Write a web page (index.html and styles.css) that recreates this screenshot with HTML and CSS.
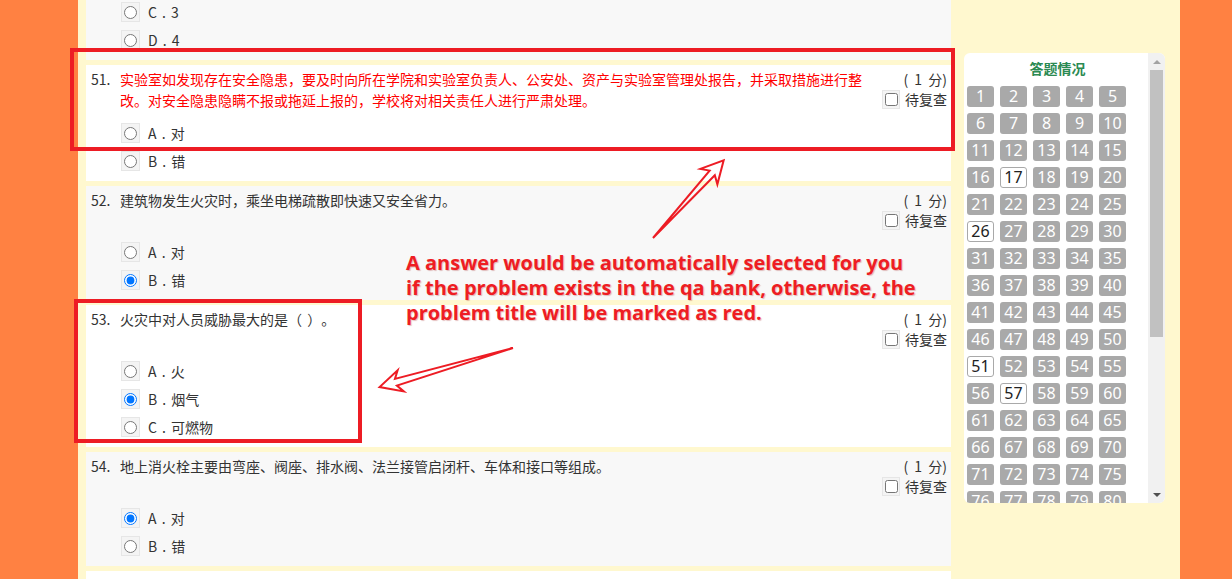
FILE: index.html
```html
<!DOCTYPE html>
<html lang="zh">
<head>
<meta charset="utf-8">
<title>答题</title>
<link rel="stylesheet" href="styles.css">
</head>
<body>
<div class="main">
  <div class="list">
    <div class="card alt partial">
      <div class="options">
        <label class="opt"><span class="radio-box"><input type="radio" name="q50"></span><span>C . 3</span></label>
        <label class="opt"><span class="radio-box"><input type="radio" name="q50"></span><span>D . 4</span></label>
      </div>
    </div>

    <div class="card">
      <div class="q-head tall">
        <div class="q-num">51.</div>
        <div class="q-title red">实验室如发现存在安全隐患，要及时向所在学院和实验室负责人、公安处、资产与实验室管理处报告，并采取措施进行整改。对安全隐患隐瞒不报或拖延上报的，学校将对相关责任人进行严肃处理。</div>
        <div class="q-side">
          <div class="score">( 1 分)</div>
          <label class="review"><span class="check-box"><input type="checkbox"></span><span>待复查</span></label>
        </div>
      </div>
      <div class="options">
        <label class="opt"><span class="radio-box"><input type="radio" name="q51"></span><span>A . 对</span></label>
        <label class="opt"><span class="radio-box"><input type="radio" name="q51"></span><span>B . 错</span></label>
      </div>
    </div>

    <div class="card alt">
      <div class="q-head">
        <div class="q-num">52.</div>
        <div class="q-title">建筑物发生火灾时，乘坐电梯疏散即快速又安全省力。</div>
        <div class="q-side">
          <div class="score">( 1 分)</div>
          <label class="review"><span class="check-box"><input type="checkbox"></span><span>待复查</span></label>
        </div>
      </div>
      <div class="options">
        <label class="opt"><span class="radio-box"><input type="radio" name="q52"></span><span>A . 对</span></label>
        <label class="opt"><span class="radio-box"><input type="radio" name="q52" checked></span><span>B . 错</span></label>
      </div>
    </div>

    <div class="card">
      <div class="q-head">
        <div class="q-num">53.</div>
        <div class="q-title">火灾中对人员威胁最大的是（ ）。</div>
        <div class="q-side">
          <div class="score">( 1 分)</div>
          <label class="review"><span class="check-box"><input type="checkbox"></span><span>待复查</span></label>
        </div>
      </div>
      <div class="options">
        <label class="opt"><span class="radio-box"><input type="radio" name="q53"></span><span>A . 火</span></label>
        <label class="opt"><span class="radio-box"><input type="radio" name="q53" checked></span><span>B . 烟气</span></label>
        <label class="opt"><span class="radio-box"><input type="radio" name="q53"></span><span>C . 可燃物</span></label>
      </div>
    </div>

    <div class="card alt">
      <div class="q-head">
        <div class="q-num">54.</div>
        <div class="q-title">地上消火栓主要由弯座、阀座、排水阀、法兰接管启闭杆、车体和接口等组成。</div>
        <div class="q-side">
          <div class="score">( 1 分)</div>
          <label class="review"><span class="check-box"><input type="checkbox"></span><span>待复查</span></label>
        </div>
      </div>
      <div class="options">
        <label class="opt"><span class="radio-box"><input type="radio" name="q54" checked></span><span>A . 对</span></label>
        <label class="opt"><span class="radio-box"><input type="radio" name="q54"></span><span>B . 错</span></label>
      </div>
    </div>

    <div class="card empty"></div>
  </div>

  <div class="side">
    <div class="side-body">
      <div class="side-title">答题情况</div>
      <div class="grid">
        <span class="n">1</span><span class="n">2</span><span class="n">3</span><span class="n">4</span><span class="n">5</span>
        <span class="n">6</span><span class="n">7</span><span class="n">8</span><span class="n">9</span><span class="n">10</span>
        <span class="n">11</span><span class="n">12</span><span class="n">13</span><span class="n">14</span><span class="n">15</span>
        <span class="n">16</span><span class="n on">17</span><span class="n">18</span><span class="n">19</span><span class="n">20</span>
        <span class="n">21</span><span class="n">22</span><span class="n">23</span><span class="n">24</span><span class="n">25</span>
        <span class="n on">26</span><span class="n">27</span><span class="n">28</span><span class="n">29</span><span class="n">30</span>
        <span class="n">31</span><span class="n">32</span><span class="n">33</span><span class="n">34</span><span class="n">35</span>
        <span class="n">36</span><span class="n">37</span><span class="n">38</span><span class="n">39</span><span class="n">40</span>
        <span class="n">41</span><span class="n">42</span><span class="n">43</span><span class="n">44</span><span class="n">45</span>
        <span class="n">46</span><span class="n">47</span><span class="n">48</span><span class="n">49</span><span class="n">50</span>
        <span class="n on">51</span><span class="n">52</span><span class="n">53</span><span class="n">54</span><span class="n">55</span>
        <span class="n">56</span><span class="n on">57</span><span class="n">58</span><span class="n">59</span><span class="n">60</span>
        <span class="n">61</span><span class="n">62</span><span class="n">63</span><span class="n">64</span><span class="n">65</span>
        <span class="n">66</span><span class="n">67</span><span class="n">68</span><span class="n">69</span><span class="n">70</span>
        <span class="n">71</span><span class="n">72</span><span class="n">73</span><span class="n">74</span><span class="n">75</span>
        <span class="n">76</span><span class="n">77</span><span class="n">78</span><span class="n">79</span><span class="n">80</span>
      </div>
    </div>
    <div class="scrollbar">
      <div class="sb-btn"><span class="tri-up"></span></div>
      <div class="sb-thumb"></div>
      <div class="sb-space"></div>
      <div class="sb-btn"><span class="tri-down"></span></div>
    </div>
  </div>
</div>

<svg class="marks" width="1232" height="579" viewBox="0 0 1232 579" xmlns="http://www.w3.org/2000/svg">
  <rect x="72" y="50" width="881" height="99" fill="none" stroke="#ed1c24" stroke-width="4"/>
  <rect x="76" y="301" width="284" height="140" fill="none" stroke="#ed1c24" stroke-width="4"/>
  <g transform="translate(653,238) rotate(-47.7)">
    <polygon points="0,0 88,-3.5 83,-11.5 105,0 83,11.5 88,3.5" fill="none" stroke="#ed1c24" stroke-width="2" stroke-linejoin="miter"/>
  </g>
  <g transform="translate(513,348) rotate(163.7)">
    <polygon points="0,0 122,-3.5 117,-11 139,0 117,11 122,3.5" fill="none" stroke="#ed1c24" stroke-width="2" stroke-linejoin="miter"/>
  </g>
</svg>

<div class="note">A answer would be automatically selected for you<br>if the problem exists in the qa bank, otherwise, the<br>problem title will be marked as red.</div>
</body>
</html>
```

FILE: styles.css
```css
html, body {
  margin: 0;
  padding: 0;
}
body {
  background: #ff8142;
  font-family: "Noto Sans CJK SC", "Noto Sans", sans-serif;
  font-size: 14px;
  color: #333;
  width: 1232px;
  height: 579px;
  overflow: hidden;
  position: relative;
  text-spacing-trim: space-all;
}
.main {
  margin-left: 78px;
  width: 1102px;
  height: 579px;
  background: #fff8cf;
  display: flex;
  align-items: flex-start;
  overflow: hidden;
}
.list {
  width: 865px;
  padding-left: 8px;
  flex-shrink: 0;
  display: flex;
  flex-direction: column;
  gap: 5px;
}
.card {
  background: #ffffff;
  padding: 4px 4px 6px 5px;
}
.card.alt {
  background: #f8f8f8;
}
.card.partial {
  margin-top: -2px;
  padding-top: 0;
}
.card.partial .options {
  margin-top: 0;
}
.card.empty {
  height: 40px;
}
.q-head {
  display: flex;
  min-height: 42px;
  line-height: 21px;
}
.q-head.tall {
  min-height: 44px;
}
.q-num {
  width: 29px;
  flex-shrink: 0;
}
.q-title {
  width: 750px;
  flex-shrink: 0;
  font-feature-settings: "chws" 0, "halt" 0;
  word-spacing: 2px;
}
.q-title.red {
  color: #ff0000;
}
.q-side {
  margin-left: auto;
  display: flex;
  flex-direction: column;
  align-items: flex-end;
}
.score {
  line-height: 21px;
  word-spacing: 3px;
}
.review {
  display: flex;
  align-items: center;
  gap: 5px;
  line-height: 19px;
}
.check-box,
.radio-box {
  width: 19px;
  height: 20px;
  box-sizing: border-box;
  border: 1px solid #e6e6e6;
  background: #f4f4f4;
  display: flex;
  align-items: center;
  justify-content: center;
}
.check-box {
  width: 18px;
  height: 19px;
}
.check-box input,
.radio-box input {
  margin: 0;
  width: 13px;
  height: 13px;
}
.options {
  margin-top: 6px;
  padding-left: 30px;
}
.opt {
  height: 28px;
  display: flex;
  align-items: center;
  gap: 8px;
  word-spacing: 2px;
}

.side {
  width: 201px;
  height: 450px;
  margin: 53px 0 0 13px;
  background: #ffffff;
  border-radius: 6px;
  display: flex;
  overflow: hidden;
  flex-shrink: 0;
}
.side-body {
  flex: 1;
  padding: 5px 0 0 3px;
  overflow: hidden;
}
.side-title {
  text-align: center;
  font-weight: bold;
  color: #2b8a52;
  line-height: 20px;
  margin-bottom: 8px;
}
.grid {
  display: grid;
  grid-template-columns: repeat(5, 27px);
  gap: 6px;
}
.n {
  height: 21px;
  box-sizing: border-box;
  background: #a9a9a9;
  color: #ffffff;
  border-radius: 3px;
  text-align: center;
  line-height: 21px;
  font-size: 16px;
  font-family: "Noto Sans", "Open Sans", sans-serif;
}
.n.on {
  background: #ffffff;
  border: 1px solid #a9a9a9;
  color: #222;
  line-height: 19px;
}
.scrollbar {
  width: 17px;
  background: #f1f1f1;
  display: flex;
  flex-direction: column;
  align-items: center;
}
.sb-btn {
  height: 17px;
  width: 17px;
  display: flex;
  align-items: center;
  justify-content: center;
}
.tri-up {
  width: 0;
  height: 0;
  border-left: 4px solid transparent;
  border-right: 4px solid transparent;
  border-bottom: 4px solid #a3a3a3;
}
.tri-down {
  width: 0;
  height: 0;
  border-left: 4px solid transparent;
  border-right: 4px solid transparent;
  border-top: 4px solid #505050;
}
.sb-thumb {
  width: 13px;
  height: 267px;
  background: #c1c1c1;
}
.sb-space {
  flex: 1;
}

.marks {
  position: absolute;
  left: 0;
  top: 0;
  pointer-events: none;
}
.note {
  position: absolute;
  left: 406px;
  top: 250px;
  font-family: "Open Sans", "Noto Sans", sans-serif;
  font-weight: bold;
  font-size: 20px;
  line-height: 25px;
  color: #ee1d23;
  white-space: nowrap;
  text-shadow: 1px 1px 1px rgba(150, 0, 0, 0.25);
}
```
